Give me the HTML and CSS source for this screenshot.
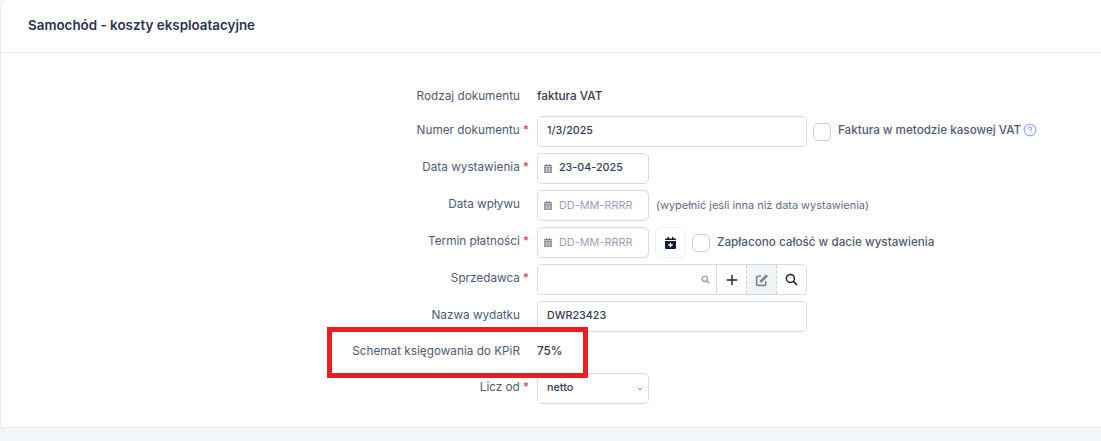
FILE: index.html
```html
<!DOCTYPE html>
<html lang="pl">
<head>
<meta charset="utf-8">
<title>Samochód - koszty eksploatacyjne</title>
<link rel="stylesheet" href="styles.css">
</head>
<body>
<main class="card">
  <header class="card-head"><h1 class="title">Samochód - koszty eksploatacyjne</h1></header>
  <form class="form">
    <div class="row row-first row-text">
      <span class="label plain">Rodzaj dokumentu</span>
      <span class="value">faktura VAT</span>
    </div>
    <div class="row">
      <span class="label">Numer dokumentu <b class="req">*</b></span>
      <div class="input wide"><span class="val">1/3/2025</span></div>
      <span class="check"></span>
      <span class="check-label first">Faktura w metodzie kasowej VAT</span>
      <svg class="help" viewBox="0 0 14 14" width="14" height="14"><circle cx="7" cy="7" r="5.8" fill="none" stroke="#8ea4f2" stroke-width="1.1"/><path d="M5.300 5.600a1.700 1.700 0 1 1 2.700 1.400c-.7.4-1 .7-1 1.300" fill="none" stroke="#8ea4f2" stroke-width="1.100"/><circle cx="7" cy="10.100" r=".7" fill="#8ea4f2"/></svg>
    </div>
    <div class="row">
      <span class="label">Data wystawienia <b class="req">*</b></span>
      <div class="input date">
        <svg class="cal" viewBox="0 0 8 9" width="8" height="9"><path d="M0 3h8v5.200a.8.8 0 0 1-.8.8H.8a.8.8 0 0 1-.8-.8zM.8 1H2V0h1v1h2V0h1v1h1.200a.8.8 0 0 1 .8.8v.7H0v-.7A.8.8 0 0 1 .8 1z" fill="#7c8490"/><path d="M0 5h8M0 7h8M2.700 3v6M5.300 3v6" stroke="#fff" stroke-width=".5"/></svg>
        <span class="val">23-04-2025</span>
      </div>
    </div>
    <div class="row">
      <span class="label plain">Data wpływu</span>
      <div class="input date">
        <svg class="cal" viewBox="0 0 8 9" width="8" height="9"><path d="M0 3h8v5.200a.8.8 0 0 1-.8.8H.8a.8.8 0 0 1-.8-.8zM.8 1H2V0h1v1h2V0h1v1h1.200a.8.8 0 0 1 .8.8v.7H0v-.7A.8.8 0 0 1 .8 1z" fill="#7c8490"/><path d="M0 5h8M0 7h8M2.700 3v6M5.300 3v6" stroke="#fff" stroke-width=".5"/></svg>
        <span class="ph">DD-MM-RRRR</span>
      </div>
      <span class="hint">(wypełnić jeśli inna niż data wystawienia)</span>
    </div>
    <div class="row">
      <span class="label">Termin płatności <b class="req">*</b></span>
      <div class="input date">
        <svg class="cal" viewBox="0 0 8 9" width="8" height="9"><path d="M0 3h8v5.200a.8.8 0 0 1-.8.8H.8a.8.8 0 0 1-.8-.8zM.8 1H2V0h1v1h2V0h1v1h1.200a.8.8 0 0 1 .8.8v.7H0v-.7A.8.8 0 0 1 .8 1z" fill="#7c8490"/><path d="M0 5h8M0 7h8M2.700 3v6M5.300 3v6" stroke="#fff" stroke-width=".5"/></svg>
        <span class="ph">DD-MM-RRRR</span>
      </div>
      <span class="cal-btn">
        <svg viewBox="0 0 11 12" width="11" height="12"><path d="M0 4h11v7a1 1 0 0 1-1 1H1a1 1 0 0 1-1-1zM1 1.500h1.500V0H4v1.500h3V0h1.500v1.500H10a1 1 0 0 1 1 1V3H0v-.5a1 1 0 0 1 1-1z" fill="#101b33"/><path d="M5.500 5.800v4.400M3.300 8h4.400" stroke="#fff" stroke-width="1.300"/></svg>
      </span>
      <span class="check"></span>
      <span class="check-label">Zapłacono całość w dacie wystawienia</span>
    </div>
    <div class="row">
      <span class="label">Sprzedawca <b class="req">*</b></span>
      <div class="search-group">
        <div class="search-field">
          <svg viewBox="0 0 10 10" width="9" height="9"><circle cx="4.200" cy="4.200" r="3" fill="none" stroke="#9aa1ab" stroke-width="1.500"/><path d="M6.500 6.500 9.300 9.300" stroke="#9aa1ab" stroke-width="1.600"/></svg>
        </div>
        <span class="addon">
          <svg viewBox="0 0 12 12" width="12" height="12"><path d="M6 .8v10.400M.8 6h10.400" stroke="#1d2433" stroke-width="1.400"/></svg>
        </span>
        <span class="addon addon-edit">
          <svg viewBox="0 0 13 13" width="14" height="14"><path d="M10 7.500v3a1 1 0 0 1-1 1H2.500a1 1 0 0 1-1-1V4a1 1 0 0 1 1-1h3.200" fill="none" stroke="#7d8592" stroke-width="1.500"/><path d="M4.800 6.700 10.300 1.200l1.800 1.800-5.500 5.500-2.200.4z" fill="#7d8592"/></svg>
        </span>
        <span class="addon">
          <svg viewBox="0 0 13 13" width="13" height="13"><circle cx="5.400" cy="5.400" r="4" fill="none" stroke="#1d2433" stroke-width="1.500"/><path d="M8.400 8.400 12 12" stroke="#1d2433" stroke-width="1.700"/></svg>
        </span>
      </div>
    </div>
    <div class="row">
      <span class="label plain">Nazwa wydatku</span>
      <div class="input wide"><span class="val">DWR23423</span></div>
    </div>
    <div class="row row-text row-scheme">
      <span class="label plain">Schemat księgowania do KPiR</span>
      <span class="value">75%</span>
      <span class="marker"></span>
    </div>
    <div class="row">
      <span class="label">Licz od <b class="req">*</b></span>
      <div class="input select">
        <span class="val">netto</span>
        <svg viewBox="0 0 6 4" width="6" height="4"><path d="M.8.800 3 3l2.200-2.200" fill="none" stroke="#8a919c" stroke-width="1"/></svg>
      </div>
    </div>
  </form>
</main>
</body>
</html>
```
FILE: styles.css
```css
* { box-sizing: border-box; }
html, body { margin: 0; padding: 0; }
body {
  width: 1101px;
  height: 441px;
  overflow: hidden;
  background: #f3f6f9;
  font-family: Inter, "Liberation Sans", sans-serif;
  font-size: 11.75px;
  color: #4f5a75;
}
.card {
  height: 428px;
  background: #fff;
  border-left: 1px solid #e8ebf1;
  border-bottom: 1px solid #e8ebf1;
  border-top-left-radius: 8px;
}
.card-head {
  height: 53px;
  padding-left: 27px;
  padding-bottom: 2px;
  display: flex;
  align-items: center;
  border-bottom: 1px solid #eaedf3;
}
.title {
  margin: 0;
  font-size: 13.4px;
  font-weight: 600;
  color: #2b3550;
}
.form { padding-top: 26px; }
.row {
  display: flex;
  align-items: center;
  height: 31px;
  margin-bottom: 6px;
}
.row-scheme { height: 29px; position: relative; }
.label {
  width: 528px;
  flex: none;
  padding-bottom: 3px;
  text-align: right;
}
.label.plain { padding-right: 9px; }
.row-first .label, .row-first .value { padding-top: 2px; padding-bottom: 0; }
.row-scheme .label, .row-scheme .value { padding-bottom: 3px; }
.req { color: #d9383f; font-weight: 400; }
.value {
  margin-left: 8px;
  color: #323c57;
  font-weight: 500;
}
.input {
  margin-left: 8px;
  height: 31px;
  display: flex;
  align-items: center;
  background: #fff;
  border: 1px solid #d3dae4;
  border-radius: 5px;
}
.wide { width: 270px; padding-left: 9px; }
.date { width: 112px; padding-left: 6px; }
.select { width: 112px; padding: 0 5px 0 9px; justify-content: space-between; }
.val { color: #323c57; font-weight: 500; font-size: 10.75px; padding-bottom: 2px; }
.ph { color: #99a1b7; font-size: 10.9px; padding-bottom: 2px; }
.cal { margin-right: 7px; flex: none; }
.check {
  width: 18px;
  height: 18px;
  margin-left: 6px;
  flex: none;
  border: 1px solid #c7d0dc;
  border-radius: 5px;
  background: #fff;
}
.check-label { margin-left: 7px; font-size: 11.7px; font-weight: 500; color: #4f5a75; padding-bottom: 2px; }
.check-label.first { font-size: 11.65px; padding-bottom: 3px; }
.help { margin-left: 2px; margin-bottom: 3px; }
.hint { margin-left: 7px; font-size: 10.95px; color: #5f6b85; padding-bottom: 2px; }
.cal-btn {
  margin-left: 6px;
  width: 31px;
  height: 31px;
  flex: none;
  display: flex;
  align-items: center;
  justify-content: center;
  border: 1px solid #eef0f4;
  border-radius: 6px;
}
.search-group {
  margin-left: 8px;
  width: 270px;
  height: 31px;
  display: flex;
  border: 1px solid #d3dae4;
  border-radius: 5px;
  overflow: hidden;
}
.search-field {
  flex: 1;
  display: flex;
  align-items: center;
  justify-content: flex-end;
  padding-right: 6px;
}
.addon {
  width: 30px;
  flex: none;
  display: flex;
  align-items: center;
  justify-content: center;
  border-left: 1px solid #d3dae4;
}
.addon-edit {
  background: #f2f5f8;
  border-left: 1px dashed #c7d0dc;
  border-right: 1px dashed #c7d0dc;
  width: 31px;
}
.addon-edit + .addon { border-left: 0; width: 29px; }
.marker {
  position: absolute;
  left: 326px;
  top: -11px;
  width: 261px;
  height: 51px;
  border: 5px solid #ec1c24;
  pointer-events: none;
}
```
